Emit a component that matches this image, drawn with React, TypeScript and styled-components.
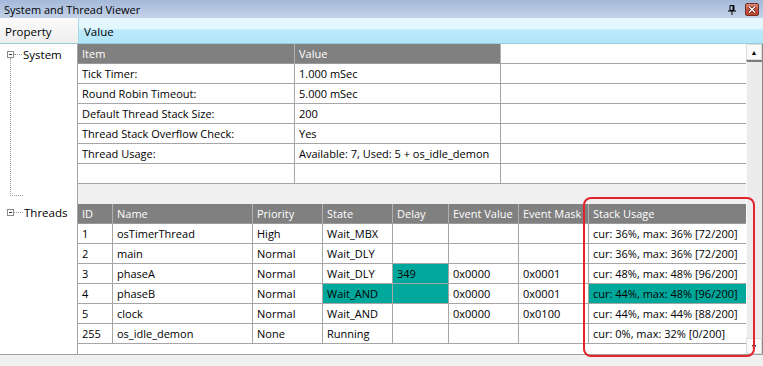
import React from "react";
import styled, { createGlobalStyle } from "styled-components";

const LINE = "#a6a6a6";
const TEAL = "#00a89c";

const GlobalStyle = createGlobalStyle`
  html, body {
    margin: 0;
    padding: 0;
    background: #ffffff;
    overflow: hidden;
  }
  body {
    font-family: "Open Sans", "Noto Sans", sans-serif;
    font-size: 11px;
    color: #000;
  }
`;

/* ── Window chrome ── */

const Window = styled.div`
  width: 763px;
  height: 366px;
  display: flex;
  flex-direction: column;
  overflow: hidden;
  position: relative;
  background: #fff;
`;

const TitleBar = styled.div`
  height: 18px;
  flex: none;
  display: flex;
  align-items: center;
  padding: 0 4px;
  background: linear-gradient(#a4b9d9, #c4d2e8);
  font-size: 11px;
  box-sizing: border-box;

  .title {
    flex: 1;
    white-space: nowrap;
  }
`;

const PinIcon = styled.svg`
  width: 10px;
  height: 10px;
  margin-right: 8px;
  margin-top: 1px;
`;

const CloseButton = styled.div`
  width: 14px;
  height: 13px;
  box-sizing: border-box;
  border: 1px solid #7a2d22;
  border-radius: 2px;
  background: linear-gradient(#d98a78, #c0503c 55%, #b8442f);
  display: flex;
  align-items: center;
  justify-content: center;
`;

const HeaderRow = styled.div`
  height: 26px;
  flex: none;
  display: flex;
  box-sizing: border-box;
  border-bottom: 1px solid #96cbe0;
`;

const HeaderCell = styled.div<{ $active?: boolean; $width?: number }>`
  ${(p) => (p.$width ? `width: ${p.$width}px; flex: none;` : "flex: 1;")}
  display: flex;
  align-items: center;
  padding-left: 5px;
  padding-top: 1px;
  box-sizing: border-box;
  font-size: 11.5px;
  border-right: ${(p) => (p.$active ? "none" : "1px solid #a9d8ea")};
  background: ${(p) =>
    p.$active
      ? "linear-gradient(#e6f7fd 0%, #e1f6fd 42%, #bce9fb 48%, #b2e5fa 100%)"
      : "linear-gradient(#fbfbfb, #eeeeee)"};
`;

const Body = styled.div`
  flex: 1;
  display: flex;
  min-height: 0;
`;

const BottomBar = styled.div`
  height: 11px;
  flex: none;
  background: #f0f0f0;
  border-top: 1px solid #a0a0a0;
`;

/* ── Tree ── */

const TreeColumn = styled.div`
  width: 78px;
  flex: none;
  box-sizing: border-box;
  border-right: 1px solid ${LINE};
  display: flex;
  flex-direction: column;
  padding-left: 7px;
`;

const NodeRow = styled.div<{ $top?: number }>`
  height: 20px;
  margin-top: ${(p) => p.$top ?? 0}px;
  display: flex;
  align-items: center;
  font-size: 11.5px;
  white-space: nowrap;
`;

const Expander = styled.span`
  width: 7px;
  height: 7px;
  box-sizing: border-box;
  border: 1px solid #8c8c8c;
  background: #fff;
  flex: none;
  display: flex;
  align-items: center;
  justify-content: center;

  &::after {
    content: "";
    width: 3px;
    height: 1px;
    background: #333;
  }
`;

const Dots = styled.span<{ $w: number }>`
  width: ${(p) => p.$w}px;
  flex: none;
  border-top: 1px dotted #9a9a9a;
  margin-right: 1px;
`;

const Guide = styled.div<{ $h: number }>`
  margin-left: 3px;
  margin-top: -6px;
  width: 12px;
  height: ${(p) => p.$h}px;
  border-left: 1px dotted #9a9a9a;
  border-bottom: 1px dotted #9a9a9a;
`;

/* ── Tables ── */

const Content = styled.div`
  flex: 1;
  display: flex;
  min-width: 0;
`;

const TableArea = styled.div`
  width: 668px;
  flex: none;
  display: flex;
  flex-direction: column;
`;

const Grid = styled.div<{ $cols: string }>`
  display: grid;
  grid-template-columns: ${(p) => p.$cols};
  grid-auto-rows: 20px;
`;

const Cell = styled.div<{ $head?: boolean; $hl?: boolean; $last?: boolean }>`
  box-sizing: border-box;
  border-bottom: 1px solid ${(p) => (p.$head ? "#9a9a9a" : LINE)};
  border-right: ${(p) => (p.$last ? "none" : `1px solid ${p.$head ? "#b0b0b0" : LINE}`)};
  padding: 0 4px;
  display: flex;
  align-items: center;
  white-space: nowrap;
  overflow: hidden;
  font-size: 11px;
  background: ${(p) => (p.$head ? "#808080" : p.$hl ? TEAL : "#fff")};
  color: ${(p) => (p.$head ? "#fff" : "#000")};
`;

const Band = styled.div`
  height: 20px;
  flex: none;
  background: #f0f0f0;
`;

const Filler = styled.div`
  flex: 1;
`;

/* ── Scrollbar ── */

const Scrollbar = styled.div`
  width: 17px;
  flex: none;
  display: flex;
  flex-direction: column;
  background: #e8e8e8;
  border-right: 1px solid #8a8a8a;
  box-sizing: border-box;
`;

const ScrollButton = styled.div`
  height: 16px;
  flex: none;
  box-sizing: border-box;
  border: 1px solid #dcdcdc;
  background: #fafafa;
  display: flex;
  align-items: center;
  justify-content: center;
  font-size: 7px;
  line-height: 1;
  color: #000;
`;

const Thumb = styled.div`
  flex: 1;
  border-top: 2px solid #7c7c7c;
  border-left: 1px solid #fcfcfc;
  background: #ececec;
`;

const Callout = styled.div`
  position: absolute;
  left: 583px;
  top: 197px;
  width: 172px;
  height: 160px;
  box-sizing: border-box;
  border: 2px solid #e3242b;
  border-radius: 8px;
  pointer-events: none;
`;

/* ── Data ── */

const SYSTEM_ROWS: [string, string][] = [
  ["Tick Timer:", "1.000 mSec"],
  ["Round Robin Timeout:", "5.000 mSec"],
  ["Default Thread Stack Size:", "200"],
  ["Thread Stack Overflow Check:", "Yes"],
  ["Thread Usage:", "Available: 7, Used: 5 + os_idle_demon"],
  ["", ""],
];

const THREAD_HEAD = ["ID", "Name", "Priority", "State", "Delay", "Event Value", "Event Mask", "Stack Usage"];

interface ThreadRow {
  cells: string[];
  hl?: number[];
}

const THREADS: ThreadRow[] = [
  { cells: ["1", "osTimerThread", "High", "Wait_MBX", "", "", "", "cur: 36%, max: 36% [72/200]"] },
  { cells: ["2", "main", "Normal", "Wait_DLY", "", "", "", "cur: 36%, max: 36% [72/200]"] },
  { cells: ["3", "phaseA", "Normal", "Wait_DLY", "349", "0x0000", "0x0001", "cur: 48%, max: 48% [96/200]"], hl: [4] },
  { cells: ["4", "phaseB", "Normal", "Wait_AND", "", "0x0000", "0x0001", "cur: 44%, max: 48% [96/200]"], hl: [3, 4, 7] },
  { cells: ["5", "clock", "Normal", "Wait_AND", "", "0x0000", "0x0100", "cur: 44%, max: 44% [88/200]"] },
  { cells: ["255", "os_idle_demon", "None", "Running", "", "", "", "cur: 0%, max: 32% [0/200]"] },
];

const SYSTEM_COLS = "217px 206px 245px";
const THREAD_COLS = "35px 140px 70px 70px 56px 70px 70px 157px";

export default function App() {
  return (
    <>
      <GlobalStyle />
      <Window>
        <TitleBar>
          <span className="title">System and Thread Viewer</span>
          <PinIcon viewBox="0 0 10 10">
            <path d="M3 0.5h4v5h-4z" fill="none" stroke="#000" strokeWidth="1" />
            <rect x="5.5" y="0" width="1.5" height="6" fill="#000" />
            <rect x="1" y="5.5" width="8" height="1" fill="#000" />
            <rect x="4.5" y="6" width="1" height="4" fill="#000" />
          </PinIcon>
          <CloseButton>
            <svg width="8" height="7" viewBox="0 0 8 7">
              <path d="M1 0.5L7 6.5M7 0.5L1 6.5" stroke="#5a1a10" strokeWidth="2.6" />
              <path d="M1 0.5L7 6.5M7 0.5L1 6.5" stroke="#fff" strokeWidth="1.4" />
            </svg>
          </CloseButton>
        </TitleBar>

        <HeaderRow>
          <HeaderCell $width={79}>Property</HeaderCell>
          <HeaderCell $active>Value</HeaderCell>
        </HeaderRow>

        <Body>
          <TreeColumn>
            <NodeRow>
              <Expander />
              <Dots $w={8} />
              System
            </NodeRow>
            <Guide $h={137} />
            <NodeRow $top={6}>
              <Expander />
              <Dots $w={9} />
              Threads
            </NodeRow>
          </TreeColumn>

          <Content>
            <TableArea>
              <Grid $cols={SYSTEM_COLS}>
                <Cell $head>Item</Cell>
                <Cell $head>Value</Cell>
                <Cell $last />
                {SYSTEM_ROWS.map(([k, v], i) => (
                  <React.Fragment key={i}>
                    <Cell>{k}</Cell>
                    <Cell>{v}</Cell>
                    <Cell $last />
                  </React.Fragment>
                ))}
              </Grid>
              <Band />
              <Grid $cols={THREAD_COLS}>
                {THREAD_HEAD.map((h, i) => (
                  <Cell key={h} $head $last={i === THREAD_HEAD.length - 1}>
                    {h}
                  </Cell>
                ))}
                {THREADS.map((row, r) =>
                  row.cells.map((c, i) => (
                    <Cell key={`${r}-${i}`} $hl={row.hl?.includes(i)} $last={i === row.cells.length - 1}>
                      {c}
                    </Cell>
                  ))
                )}
              </Grid>
              <Filler />
            </TableArea>

            <Scrollbar>
              <ScrollButton>▲</ScrollButton>
              <Thumb />
              <ScrollButton>▼</ScrollButton>
            </Scrollbar>
          </Content>
        </Body>

        <BottomBar />
        <Callout />
      </Window>
    </>
  );
}
